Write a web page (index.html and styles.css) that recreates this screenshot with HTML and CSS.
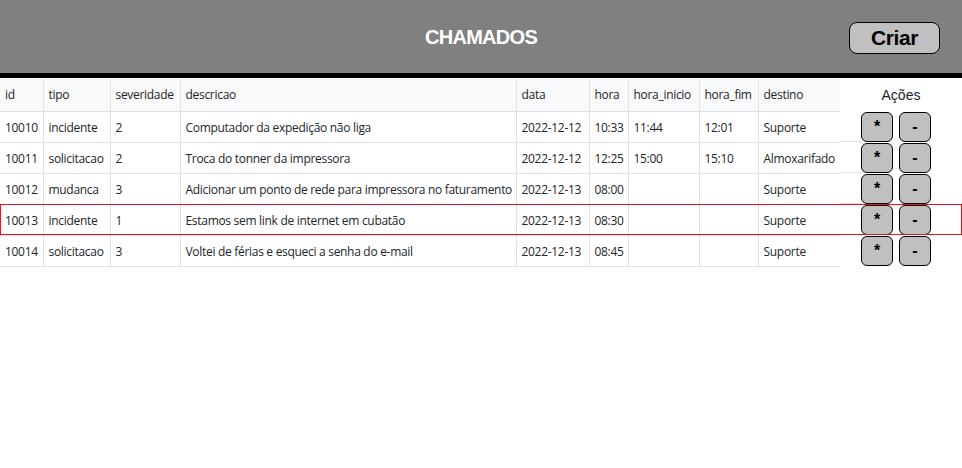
FILE: index.html
```html
<!DOCTYPE html>
<html lang="pt-BR">
<head>
<meta charset="utf-8">
<title>Chamados</title>
<link rel="stylesheet" href="styles.css">
</head>
<body>
<header class="topbar">
  <h1 class="title">CHAMADOS</h1>
  <button class="btn-criar">Criar</button>
</header>
<table class="grid">
  <colgroup>
    <col class="c-id"><col class="c-tipo"><col class="c-sev"><col class="c-desc"><col class="c-data"><col class="c-hora"><col class="c-hi"><col class="c-hf"><col class="c-dest"><col class="c-acoes">
  </colgroup>
  <thead>
    <tr>
      <th>id</th><th>tipo</th><th>severidade</th><th>descricao</th><th>data</th><th>hora</th><th>hora_inicio</th><th>hora_fim</th><th class="dest">destino</th><th class="acoes-h">Ações</th>
    </tr>
  </thead>
  <tbody>
    <tr>
      <td>10010</td><td>incidente</td><td>2</td><td>Computador da expedição não liga</td><td>2022-12-12</td><td>10:33</td><td>11:44</td><td>12:01</td><td class="dest">Suporte</td>
      <td class="acoes"><div class="btns"><button class="btn-acao">*</button><button class="btn-acao">-</button></div></td>
    </tr>
    <tr>
      <td>10011</td><td>solicitacao</td><td>2</td><td>Troca do tonner da impressora</td><td>2022-12-12</td><td>12:25</td><td>15:00</td><td>15:10</td><td class="dest">Almoxarifado</td>
      <td class="acoes"><div class="btns"><button class="btn-acao">*</button><button class="btn-acao">-</button></div></td>
    </tr>
    <tr>
      <td>10012</td><td>mudanca</td><td>3</td><td>Adicionar um ponto de rede para impressora no faturamento</td><td>2022-12-13</td><td>08:00</td><td></td><td></td><td class="dest">Suporte</td>
      <td class="acoes"><div class="btns"><button class="btn-acao">*</button><button class="btn-acao">-</button></div></td>
    </tr>
    <tr class="selected">
      <td>10013</td><td>incidente</td><td>1</td><td>Estamos sem link de internet em cubatão</td><td>2022-12-13</td><td>08:30</td><td></td><td></td><td class="dest">Suporte</td>
      <td class="acoes"><div class="btns"><button class="btn-acao">*</button><button class="btn-acao">-</button></div></td>
    </tr>
    <tr>
      <td>10014</td><td>solicitacao</td><td>3</td><td>Voltei de férias e esqueci a senha do e-mail</td><td>2022-12-13</td><td>08:45</td><td></td><td></td><td class="dest">Suporte</td>
      <td class="acoes last"><div class="btns"><button class="btn-acao">*</button><button class="btn-acao">-</button></div></td>
    </tr>
  </tbody>
</table>
</body>
</html>
```
FILE: styles.css
```css
* { box-sizing: border-box; }
html, body { margin: 0; padding: 0; background: #fff; }
body { font-family: "Open Sans", "Noto Sans", sans-serif; color: #212529; }

.topbar {
  height: 78px;
  background: #808080;
  border-bottom: 5px solid #000;
  display: flex;
  align-items: center;
  justify-content: center;
  position: relative;
}
.title {
  margin: 0;
  font-family: "Liberation Sans", Arial, sans-serif;
  font-weight: bold;
  font-size: 20px;
  letter-spacing: -0.7px;
  color: #fff;
  padding-top: 1px;
}
.btn-criar {
  position: absolute;
  left: 849px;
  top: 22px;
  width: 91px;
  height: 32px;
  background: #c0c0c0;
  border: 1px solid #000;
  border-radius: 8px;
  font-family: "Liberation Sans", Arial, sans-serif;
  font-weight: bold;
  font-size: 21px;
  letter-spacing: -0.4px;
  color: #000;
  padding: 0;
  line-height: 30px;
}

.grid {
  width: 962px;
  table-layout: fixed;
  border-collapse: collapse;
  font-size: 12px;
  letter-spacing: -0.3px;
  margin-top: 1px;
}
.c-id { width: 43px; }
.c-tipo { width: 67px; }
.c-sev { width: 70px; }
.c-desc { width: 336px; }
.c-data { width: 73px; }
.c-hora { width: 39px; }
.c-hi { width: 71px; }
.c-hf { width: 59px; }
.c-dest { width: 82px; }
.c-acoes { width: 122px; }

.grid th, .grid td {
  border: 1px solid #dee2e6;
  border-top: none;
  padding: 0 5px;
  text-align: left;
  white-space: nowrap;
  overflow: hidden;
  vertical-align: middle;
}
.grid th:first-child, .grid td:first-child { border-left: none; }
.grid th.dest, .grid td.dest { border-right: none; }
.grid thead th {
  height: 32px;
  background: #f8f9fa;
  font-weight: normal;
}
.grid tbody td { height: 31px; padding-top: 1px; }

.grid th.acoes-h {
  background: #fff;
  border: none;
  text-align: center;
  font-family: "Liberation Sans", Arial, sans-serif;
  font-size: 14px;
  letter-spacing: 0;
  padding: 0;
}
.grid td.acoes {
  border: none;
  padding: 0;
  background-image: linear-gradient(#dee2e6, #dee2e6);
  background-size: 22px 1px;
  background-position: left bottom;
  background-repeat: no-repeat;
}
.grid td.acoes.last { background-image: none; }
.btns {
  display: flex;
  gap: 6px;
  padding-left: 21px;
  padding-top: 1px;
  height: 31px;
}
.btn-acao {
  width: 32px;
  height: 30px;
  background: #c0c0c0;
  border: 1px solid #000;
  border-radius: 6px;
  font-family: "Liberation Sans", Arial, sans-serif;
  font-weight: bold;
  font-size: 16px;
  letter-spacing: 0;
  color: #000;
  padding: 0;
}
.grid tr.selected {
  outline: 1px solid #e8141b;
  outline-offset: -1px;
}
```
